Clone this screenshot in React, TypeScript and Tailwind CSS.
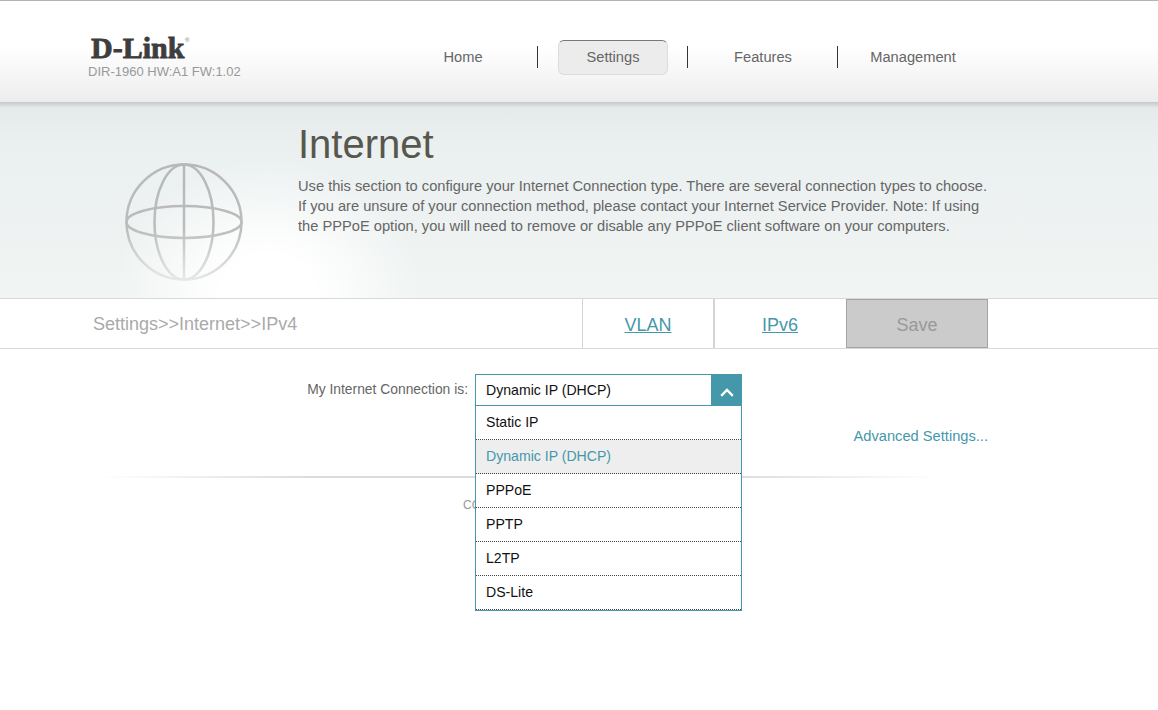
import React from "react";

const font = { fontFamily: '"Liberation Sans", Arial, sans-serif' };

function Globe() {
  return (
    <svg width="122" height="122" viewBox="0 0 122 122" fill="none">
      <defs>
        <linearGradient id="g" gradientUnits="userSpaceOnUse" x1="0" y1="2" x2="0" y2="120">
          <stop offset="0" stopColor="#b8b8b8" />
          <stop offset="0.55" stopColor="#bcbcbc" />
          <stop offset="1" stopColor="#e8e8e8" />
        </linearGradient>
      </defs>
      <g stroke="url(#g)" strokeWidth="2.5">
        <circle cx="61" cy="61" r="57.5" />
        <ellipse cx="61" cy="61" rx="57.5" ry="16" />
        <ellipse cx="61" cy="61" rx="29.5" ry="57.5" />
        <path d="M61 3.5V118.5" />
      </g>
    </svg>
  );
}

function NavItem({ label, active, last }: { label: string; active?: boolean; last?: boolean }) {
  return (
    <div className="relative flex w-[150px] items-center justify-center">
      <div
        className={
          active
            ? "flex h-[35px] w-[110px] items-center justify-center rounded-[6px] border border-[#dcdcdc] border-t-[#777] bg-[#ececec] pb-[2px] text-[14.67px] text-[#666]"
            : "flex h-[35px] w-[110px] items-center justify-center pb-[2px] text-[14.67px] text-[#666]"
        }
      >
        {label}
      </div>
      {!last && <div className="absolute right-0 top-[6px] h-[22px] w-px bg-[#333]" />}
    </div>
  );
}

const options = ["Static IP", "Dynamic IP (DHCP)", "PPPoE", "PPTP", "L2TP", "DS-Lite"];

export default function App() {
  return (
    <div className="min-h-[710px] w-[1158px] overflow-hidden bg-white" style={font}>
      <header className="h-[102px] border-t border-[#b3b3b3] bg-[linear-gradient(to_bottom,#ffffff_0%,#ffffff_45%,#ededed_100%)]">
        <div className="flex pl-[88px] pt-[32px]">
          <div className="w-[300px]">
            <div className="relative ml-[3px] h-[32px] w-fit">
              <span
                className="block text-[30px] font-bold leading-[30px] text-[#3d3d3d] [-webkit-text-stroke:0.8px_#3d3d3d]"
                style={{ fontFamily: '"Liberation Serif", serif' }}
              >
                D-Link
              </span>
              <span className="absolute -right-[5px] top-[4px] text-[6px] leading-none text-[#777]">®</span>
            </div>
            <div className="-mt-[1px] text-[13px] leading-[15px] text-[#999]">DIR-1960 HW:A1 FW:1.02</div>
          </div>
          <nav className="mt-[7px] flex h-[35px]">
            <NavItem label="Home" />
            <NavItem label="Settings" active />
            <NavItem label="Features" />
            <NavItem label="Management" last />
          </nav>
        </div>
      </header>

      <section className="h-[196px] bg-[radial-gradient(ellipse_155px_135px_at_268px_192px,#ffffff_0%,#ffffff_30%,rgba(255,255,255,0)_100%),linear-gradient(to_bottom,#c6c9ca_0px,#e5eaeb_6px,#ebf0f0_50px,#f0f4f3_100%)]">
        <div className="flex">
          <div className="w-[298px] pl-[123px] pt-[59px]">
            <Globe />
          </div>
          <div className="flex-1 pt-[17px]">
            <h1 className="text-[40px] font-normal leading-[50px] text-[#57574d]">Internet</h1>
            <p className="mt-[7px] w-[720px] text-[14.67px] leading-[20px] text-[#666]">
              Use this section to configure your Internet Connection type. There are several connection types to choose.
              <br />
              If you are unsure of your connection method, please contact your Internet Service Provider. Note: If using
              <br />
              the PPPoE option, you will need to remove or disable any PPPoE client software on your computers.
            </p>
          </div>
        </div>
      </section>

      <div className="flex h-[51px] items-stretch border-y border-[#d9d9d9] pl-[93px]">
        <div className="flex w-[489px] items-center pt-[1px] text-[18px] text-[#aaa]">Settings&gt;&gt;Internet&gt;&gt;IPv4</div>
        <a className="flex w-[133px] items-center justify-center border-l border-r-2 border-[#d4d4d4] pt-[3px] text-[18px] text-[#4598aa] underline">VLAN</a>
        <a className="flex w-[131px] items-center justify-center pr-[1px] pt-[3px] text-[18px] text-[#4598aa] underline">IPv6</a>
        <button className="flex w-[142px] items-center justify-center border border-[#a3a3a3] bg-[#cbcbcb] pt-[3px] text-[18px] text-[#999]">Save</button>
      </div>

      <main className="relative">
        <div className="flex pt-[25px]">
          <div className="w-[468px] pt-[7px] text-right text-[13.85px] leading-[16px] text-[#666]">My Internet Connection is:</div>
        </div>
        <div className="flex justify-end pr-[170px] pt-[29px]">
          <a className="text-[14.67px] leading-[20px] text-[#4598aa]">Advanced Settings...</a>
        </div>
        <div className="ml-[100px] mt-[30px] h-[2px] w-[840px] bg-[linear-gradient(to_right,rgba(221,221,221,0)_0%,#dcdcdc_25%,#dcdcdc_75%,rgba(221,221,221,0)_100%)]" />
        <div className="ml-[463px] mt-[20px] text-[12px] leading-[14px] text-[#999]">COPYRIGHT © 2018 D-Link</div>

        <div className="absolute left-[475px] top-[25px] w-[267px] border border-[#4598aa] bg-white text-[14.1px] text-[#111]">
          <div className="flex h-[31px] items-center border-b border-[#4598aa]">
            <span className="flex-1 pl-[10px] pt-[2px]">Dynamic IP (DHCP)</span>
            <span className="flex h-[31px] w-[30px] items-center justify-center bg-[#4598aa] pl-[1px] pt-[4px]">
              <svg width="14" height="9" viewBox="0 0 14 9" fill="none" stroke="#fff" strokeWidth="2.4">
                <path d="M1.2 7.8L7 2L12.8 7.8" />
              </svg>
            </span>
          </div>
          {options.map((o) => (
            <div
              key={o}
              className={
                o === "Dynamic IP (DHCP)"
                  ? "flex h-[34px] items-center border-b border-dotted border-[#444] bg-[#eeeeee] pl-[10px] text-[#4598aa]"
                  : "flex h-[34px] items-center border-b border-dotted border-[#444] pl-[10px]"
              }
            >
              {o}
            </div>
          ))}
        </div>
      </main>
    </div>
  );
}
